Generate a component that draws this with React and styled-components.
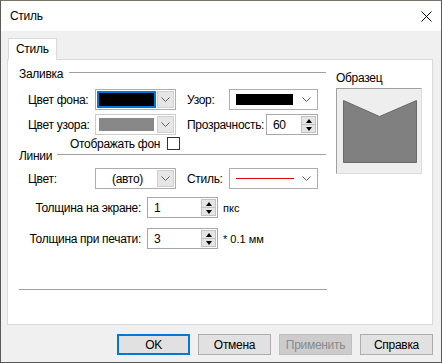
import React from "react";
import styled, { createGlobalStyle } from "styled-components";

const GlobalStyle = createGlobalStyle`
  html, body { margin: 0; padding: 0; background: #fff; }
  body {
    font-family: "Liberation Sans", Arial, sans-serif;
    font-size: 12px;
    letter-spacing: -0.3px;
    color: #000;
  }
`;

const Window = styled.div`
  width: 442px;
  height: 363px;
  box-sizing: border-box;
  border: 1px solid #5a5a5a;
  border-top-color: #7d7368;
  background: #f0f0f0;
  display: flex;
  flex-direction: column;
`;

const TitleBar = styled.div`
  height: 30px;
  flex: none;
  background: #fff;
  display: flex;
  align-items: center;
  justify-content: space-between;
  padding: 0 9px 0 9px;
`;

const Body = styled.div`
  flex: 1;
  display: flex;
  flex-direction: column;
  padding: 7px 8px 8px 6px;
`;

const TabStrip = styled.div`
  display: flex;
  padding-left: 1px;
  margin-bottom: -1px;
  position: relative;
  z-index: 1;
`;

const Tab = styled.div`
  height: 20px;
  line-height: 20px;
  padding: 0 7px;
  background: #fff;
  border: 1px solid #d9d9d9;
  border-bottom: 1px solid #fff;
`;

const Panel = styled.div`
  height: 266px;
  box-sizing: border-box;
  background: #fff;
  border: 1px solid #d9d9d9;
  display: flex;
  gap: 9px;
  padding: 7px 10px 0 11px;
`;

const LeftCol = styled.div`
  width: 310px;
  display: flex;
  flex-direction: column;
`;

const RightCol = styled.div`
  width: 86px;
  display: flex;
  flex-direction: column;
`;

const GroupHeader = styled.div`
  display: flex;
  align-items: center;
  gap: ${(p) => p.$gap || 6}px;
  height: ${(p) => p.$h || 14}px;
  line-height: ${(p) => p.$h || 14}px;
  padding-right: 1px;
`;

const HLine = styled.div`
  flex: 1;
  height: 1px;
  background: #a0a0a0;
  margin-top: ${(p) => p.$mt || 0}px;
`;

const Separator = styled(HLine)`
  flex: none;
`;

const FieldRow = styled.div`
  display: grid;
  grid-template-columns: 67px 81px 142px;
  align-items: center;
  height: 21px;
  padding-left: 9px;
  margin-top: ${(p) => p.$mt}px;
`;

const Half = styled.div`
  display: flex;
  align-items: center;
  justify-content: space-between;
  padding-left: 11px;
`;

const Combo = styled.div`
  width: ${(p) => p.$w}px;
  height: 21px;
  box-sizing: border-box;
  border: 1px solid ${(p) => (p.$disabled ? "#cccccc" : "#adadad")};
  background: #fff;
  display: flex;
  align-items: stretch;
  padding: 1px;
`;

const Swatch = styled.div`
  flex: 1;
  box-sizing: border-box;
  background: ${(p) => p.$color};
  border: 2px solid ${(p) => (p.$focus ? "#0078d7" : "#fff")};
  margin: ${(p) => p.$m || "0"};
`;

const ComboText = styled.div`
  flex: 1;
  display: flex;
  align-items: center;
  justify-content: center;
  padding-left: 2px;
`;

const StyleLine = styled.div`
  flex: 1;
  display: flex;
  align-items: center;
  padding: 0 1px 0 5px;
  &::before {
    content: "";
    flex: 1;
    height: 1px;
    background: #e00000;
  }
`;

const DropBtn = styled.div`
  width: ${(p) => (p.$boxed ? 17 : 20)}px;
  box-sizing: border-box;
  margin-left: 1px;
  display: flex;
  align-items: center;
  justify-content: center;
  background: ${(p) => (p.$boxed ? "#e6e6e6" : "transparent")};
  border: 1px solid ${(p) => (p.$boxed ? "#d0d0d0" : "transparent")};
`;

const Chevron = () => (
  <svg width="9" height="5" viewBox="0 0 9 5">
    <polyline points="0.5,0.5 4.5,4.5 8.5,0.5" fill="none" stroke="#606060" strokeWidth="1" />
  </svg>
);

const ComboBox = ({ w, disabled, boxed, children }) => (
  <Combo $w={w} $disabled={disabled}>
    {children}
    <DropBtn $boxed={boxed}>
      <Chevron />
    </DropBtn>
  </Combo>
);

const Spin = styled.div`
  width: ${(p) => p.$w}px;
  height: 21px;
  box-sizing: border-box;
  border: 1px solid #a8a8a8;
  background: #fff;
  display: flex;
  align-items: stretch;
  padding: 1px;
`;

const SpinValue = styled.div`
  flex: 1;
  display: flex;
  align-items: center;
  padding-left: 5px;
`;

const SpinButtons = styled.div`
  width: 15px;
  display: flex;
  flex-direction: column;
`;

const SpinHalf = styled.div`
  flex: 1;
  box-sizing: border-box;
  background: #e5e5e5;
  border: 1px solid #c2c2c2;
  border-top-width: ${(p) => (p.$down ? 0 : 1)}px;
  display: flex;
  align-items: center;
  justify-content: center;
  &::after {
    content: "";
    border-left: 3.5px solid transparent;
    border-right: 3.5px solid transparent;
    ${(p) =>
      p.$down ? "border-top: 4px solid #000;" : "border-bottom: 4px solid #000;"}
  }
`;

const SpinBox = ({ w, value }) => (
  <Spin $w={w}>
    <SpinValue>{value}</SpinValue>
    <SpinButtons>
      <SpinHalf />
      <SpinHalf $down />
    </SpinButtons>
  </Spin>
);

const CheckRow = styled.div`
  display: flex;
  align-items: center;
  gap: 7px;
  height: 13px;
  padding-left: 51px;
  margin-top: 2px;
`;

const Check = styled.div`
  width: 13px;
  height: 13px;
  box-sizing: border-box;
  border: 1px solid #333;
  background: #fff;
`;

const ThickRow = styled.div`
  display: grid;
  grid-template-columns: 122px 71px auto;
  column-gap: 6px;
  align-items: center;
  height: 21px;
  margin-top: ${(p) => p.$mt}px;
`;

const ThickLabel = styled.div`
  text-align: right;
`;

const Unit = styled.div`
  font-size: 11px;
  letter-spacing: 0;
  margin-left: -1px;
`;

const SampleLabel = styled.div`
  height: 14px;
  line-height: 14px;
  margin-top: 4px;
`;

const SampleBox = styled.div`
  width: 86px;
  height: 86px;
  box-sizing: border-box;
  margin-top: 3px;
  border: 1px solid;
  border-color: #a0a0a0 #dcdcdc #dcdcdc #a0a0a0;
  background: #eeeeee;
`;

const ButtonRow = styled.div`
  display: flex;
  justify-content: flex-end;
  gap: 8px;
  margin-top: 9px;
`;

const Button = styled.button`
  width: 73px;
  height: 21px;
  box-sizing: border-box;
  font-family: inherit;
  font-size: 12px;
  letter-spacing: -0.3px;
  padding: 0;
  color: ${(p) => (p.disabled ? "#8a8a8a" : "#000")};
  background: ${(p) => (p.disabled ? "#cccccc" : "#e1e1e1")};
  border: ${(p) => (p.$default ? "2px solid #0078d7" : p.disabled ? "1px solid #bfbfbf" : "1px solid #adadad")};
`;

export default function App() {
  return (
    <>
      <GlobalStyle />
      <Window>
        <TitleBar>
          <span>Стиль</span>
          <svg width="11" height="11" viewBox="0 0 11 11">
            <path d="M0.5 0.5 L10.5 10.5 M10.5 0.5 L0.5 10.5" stroke="#000" strokeWidth="1" />
          </svg>
        </TitleBar>
        <Body>
          <TabStrip>
            <Tab>Стиль</Tab>
          </TabStrip>
          <Panel>
            <LeftCol>
              <GroupHeader>
                <span>Заливка</span>
                <HLine $mt={-3} />
              </GroupHeader>
              <FieldRow $mt={8}>
                <span>Цвет фона:</span>
                <ComboBox w={81} boxed>
                  <Swatch $color="#000" $focus />
                </ComboBox>
                <Half>
                  <span>Узор:</span>
                  <ComboBox w={89}>
                    <Swatch $color="#000" $m="1px 0 1px 3px" />
                  </ComboBox>
                </Half>
              </FieldRow>
              <FieldRow $mt={4}>
                <span>Цвет узора:</span>
                <ComboBox w={81} boxed disabled>
                  <Swatch $color="#888888" />
                </ComboBox>
                <Half>
                  <span>Прозрачность:</span>
                  <SpinBox w={52} value="60" />
                </Half>
              </FieldRow>
              <CheckRow>
                <span>Отображать фон</span>
                <Check />
              </CheckRow>
              <GroupHeader $h={12} $gap={5}>
                <span>Линии</span>
                <HLine $mt={-3} />
              </GroupHeader>
              <FieldRow $mt={6}>
                <span>Цвет:</span>
                <ComboBox w={81} boxed>
                  <ComboText>(авто)</ComboText>
                </ComboBox>
                <Half>
                  <span>Стиль:</span>
                  <ComboBox w={89}>
                    <StyleLine />
                  </ComboBox>
                </Half>
              </FieldRow>
              <ThickRow $mt={8}>
                <ThickLabel>Толщина на экране:</ThickLabel>
                <SpinBox w={71} value="1" />
                <Unit>пкс</Unit>
              </ThickRow>
              <ThickRow $mt={10}>
                <ThickLabel>Толщина при печати:</ThickLabel>
                <SpinBox w={71} value="3" />
                <Unit>* 0.1 мм</Unit>
              </ThickRow>
              <Separator $mt={40} />
            </LeftCol>
            <RightCol>
              <SampleLabel>Образец</SampleLabel>
              <SampleBox>
                <svg width="84" height="84" viewBox="0 0 84 84">
                  <polygon
                    points="6.5,11.5 42.5,27.5 79.5,11.5 79.5,73.5 6.5,73.5"
                    fill="#808080"
                    stroke="#696969"
                    strokeWidth="1"
                  />
                </svg>
              </SampleBox>
            </RightCol>
          </Panel>
          <ButtonRow>
            <Button $default>OK</Button>
            <Button>Отмена</Button>
            <Button disabled>Применить</Button>
            <Button>Справка</Button>
          </ButtonRow>
        </Body>
      </Window>
    </>
  );
}
